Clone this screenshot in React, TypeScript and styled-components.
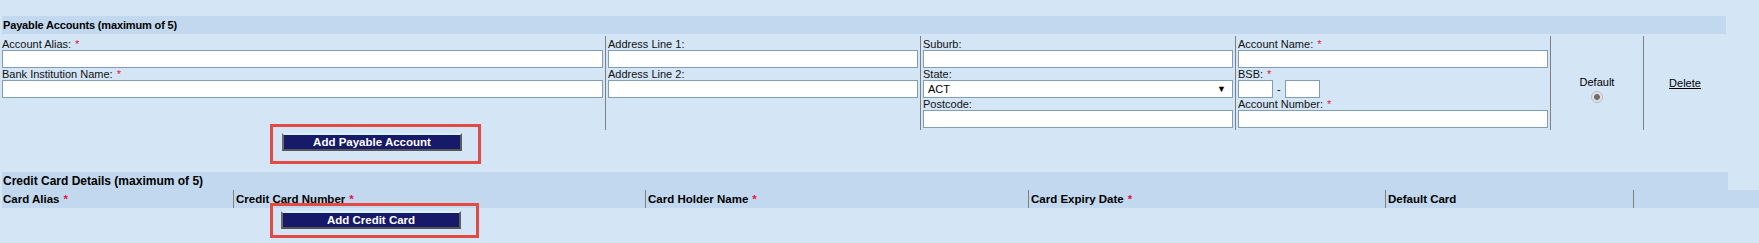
import React from 'react';
import styled, { createGlobalStyle } from 'styled-components';

const Global = createGlobalStyle`
  html, body { margin: 0; padding: 0; background: #D4E5F6; }
  body {
    font-family: "Liberation Sans", Arial, sans-serif;
    font-size: 11px;
    color: #000;
  }
`;

const Page = styled.div`
  width: 1759px;
  height: 243px;
  box-sizing: border-box;
  padding: 16px 0 0 2px;
  background: #D4E5F6;
`;

const SectionHeader = styled.div<{ $width: number; $size: number; $track: number }>`
  width: ${p => p.$width}px;
  height: 18px;
  line-height: 18px;
  padding-left: 1px;
  box-sizing: border-box;
  background: #C1D8EE;
  font-weight: bold;
  font-size: ${p => p.$size}px;
  letter-spacing: ${p => p.$track}px;
  white-space: nowrap;
`;

const AccountRow = styled.div`
  display: grid;
  grid-template-columns: 603px 315px 315px 315px 93px 83px;
  height: 94px;
  margin-top: 2px;
`;

const FieldCell = styled.div<{ $divided?: boolean }>`
  display: flex;
  flex-direction: column;
  padding: 2px 2px 2px ${p => (p.$divided ? '2px' : '0')};
  border-left: ${p => (p.$divided ? '1px solid #808080' : 'none')};
  min-width: 0;
`;

const CenterCell = styled.div<{ $shift?: number }>`
  display: flex;
  flex-direction: column;
  align-items: center;
  justify-content: center;
  padding-top: ${p => p.$shift ?? 0}px;
  border-left: 1px solid #808080;
  box-sizing: border-box;
`;

const Label = styled.div`
  height: 12px;
  line-height: 12px;
  white-space: nowrap;
  color: #111;
`;

const Req = styled.span`
  color: #E8103E;
  margin-left: 4px;
`;

const TextBox = styled.div<{ $w?: number }>`
  height: 18px;
  box-sizing: border-box;
  width: ${p => (p.$w ? `${p.$w}px` : 'auto')};
  border: 1px solid #7F9DB9;
  background: #fff;
  flex: none;
`;

const SelectBox = styled.div`
  height: 18px;
  box-sizing: border-box;
  border: 1px solid #7F9DB9;
  background: #fff;
  display: flex;
  align-items: center;
  justify-content: space-between;
  padding: 0 6px 0 4px;
  font-size: 11px;
`;

const Arrow = styled.span`
  font-size: 9px;
  line-height: 1;
`;

const BsbRow = styled.div`
  display: flex;
  align-items: center;
`;

const Dash = styled.span`
  margin: 0 4px;
  line-height: 18px;
`;

const DefaultLabel = styled.div`
  line-height: 12px;
`;

const Radio = styled.span`
  display: block;
  width: 12px;
  height: 12px;
  margin-top: 3px;
  box-sizing: border-box;
  border-radius: 50%;
  border: 1px solid #B8B8B8;
  background: radial-gradient(circle at 50% 50%, #6E6E6E 0 2.6px, #DCDCDC 3.2px, #F2F2F2 100%);
`;

const DeleteLink = styled.a`
  color: #000;
  text-decoration: underline;
  line-height: 12px;
  cursor: pointer;
`;

const ButtonRow = styled.div<{ $left: number; $bottom: number }>`
  display: flex;
  padding: 3px 0 ${p => p.$bottom}px ${p => p.$left}px;
`;

const Highlight = styled.span`
  position: relative;
  display: inline-block;
`;

const Ring = styled.span<{ $t: number; $r: number; $b: number; $l: number }>`
  position: absolute;
  top: -${p => p.$t}px;
  right: -${p => p.$r}px;
  bottom: -${p => p.$b}px;
  left: -${p => p.$l}px;
  border: 3px solid #E24A42;
  pointer-events: none;
`;

const ActionButton = styled.button`
  width: 180px;
  height: 18px;
  box-sizing: border-box;
  margin: 0;
  padding: 0;
  background: #171A68;
  color: #fff;
  font-family: "Liberation Sans", Arial, sans-serif;
  font-size: 11.5px;
  font-weight: bold;
  line-height: 14px;
  border-top: 2px solid #D6F3FF;
  border-left: 2px solid #6A6A6A;
  border-right: 2px solid #5C5C5C;
  border-bottom: 2px solid #555;
  cursor: pointer;
`;

const CardHeaderRow = styled.div`
  display: grid;
  grid-template-columns: 231px 412px 383px 357px 248px 95px;
  height: 18px;
  background: #C1D8EE;
  font-weight: bold;
  font-size: 11.5px;
`;

const CardHeaderCell = styled.div<{ $divided?: boolean }>`
  line-height: 18px;
  white-space: nowrap;
  padding-left: ${p => (p.$divided ? '2px' : '1px')};
  border-left: ${p => (p.$divided ? '1px solid #808080' : 'none')};
`;

const cardColumns: { title: string; req: boolean }[] = [
  { title: 'Card Alias', req: true },
  { title: 'Credit Card Number', req: true },
  { title: 'Card Holder Name', req: true },
  { title: 'Card Expiry Date', req: true },
  { title: 'Default Card', req: false },
  { title: '', req: false },
];

const Field: React.FC<{ label: string; req?: boolean }> = ({ label, req }) => (
  <>
    <Label>
      {label}
      {req && <Req>*</Req>}
    </Label>
    <TextBox />
  </>
);

export default function App() {
  return (
    <>
      <Global />
      <Page>
        <SectionHeader $width={1724} $size={11} $track={-0.15}>
          Payable Accounts (maximum of 5)
        </SectionHeader>
        <AccountRow>
          <FieldCell>
            <Field label="Account Alias:" req />
            <Field label="Bank Institution Name:" req />
          </FieldCell>
          <FieldCell $divided>
            <Field label="Address Line 1:" />
            <Field label="Address Line 2:" />
          </FieldCell>
          <FieldCell $divided>
            <Field label="Suburb:" />
            <Label>State:</Label>
            <SelectBox>
              <span>ACT</span>
              <Arrow>▼</Arrow>
            </SelectBox>
            <Field label="Postcode:" />
          </FieldCell>
          <FieldCell $divided>
            <Field label="Account Name:" req />
            <Label>
              BSB:<Req>*</Req>
            </Label>
            <BsbRow>
              <TextBox $w={35} />
              <Dash>-</Dash>
              <TextBox $w={35} />
            </BsbRow>
            <Field label="Account Number:" req />
          </FieldCell>
          <CenterCell $shift={12}>
            <DefaultLabel>Default</DefaultLabel>
            <Radio />
          </CenterCell>
          <CenterCell>
            <DeleteLink>Delete</DeleteLink>
          </CenterCell>
        </AccountRow>
        <ButtonRow $left={280} $bottom={21}>
          <Highlight>
            <ActionButton>Add Payable Account</ActionButton>
            <Ring $t={9} $r={19} $b={13} $l={12} />
          </Highlight>
        </ButtonRow>
        <SectionHeader $width={1726} $size={12} $track={0}>
          Credit Card Details (maximum of 5)
        </SectionHeader>
        <CardHeaderRow>
          {cardColumns.map((c, i) => (
            <CardHeaderCell key={i} $divided={i > 0}>
              {c.title}
              {c.req && <Req>*</Req>}
            </CardHeaderCell>
          ))}
        </CardHeaderRow>
        <ButtonRow $left={279} $bottom={0}>
          <Highlight>
            <ActionButton>Add Credit Card</ActionButton>
            <Ring $t={8} $r={18} $b={9} $l={11} />
          </Highlight>
        </ButtonRow>
      </Page>
    </>
  );
}
